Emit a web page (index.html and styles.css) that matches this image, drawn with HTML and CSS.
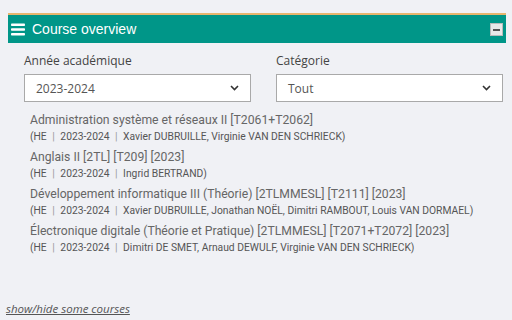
FILE: index.html
```html
<!DOCTYPE html>
<html>
	<head>
		<meta charset="UTF-8">
		<title>Course overview</title>
		<link rel="stylesheet" href="styles.css">
	</head>
	<body>
		<div class="panel">
			<div class="panel-head">
				<svg class="burger" width="14" height="13" viewBox="0 0 14 13">
					<rect x="0" y="0.5" width="14" height="2.6" rx="0.8" fill="#fff"/>
					<rect x="0" y="5.2" width="14" height="2.6" rx="0.8" fill="#fff"/>
					<rect x="0" y="9.9" width="14" height="2.6" rx="0.8" fill="#fff"/>
				</svg>
				<span class="panel-title">Course overview</span>
				<span class="collapse"><i></i></span>
			</div>
			<div class="filters">
				<div class="field">
					<label>Année académique</label>
					<div class="select">
						<span>2023-2024</span>
						<svg width="9" height="6" viewBox="0 0 9 6"><path d="M1 1l3.5 3.5L8 1" fill="none" stroke="#333" stroke-width="1.6"/></svg>
					</div>
				</div>
				<div class="field">
					<label>Catégorie</label>
					<div class="select">
						<span>Tout</span>
						<svg width="9" height="6" viewBox="0 0 9 6"><path d="M1 1l3.5 3.5L8 1" fill="none" stroke="#333" stroke-width="1.6"/></svg>
					</div>
				</div>
			</div>
			<ul class="courses">
				<li>
					<div class="c-title">Administration système et réseaux II [T2061+T2062]</div>
					<div class="c-meta">(HE <b>|</b> 2023-2024 <b>|</b> Xavier DUBRUILLE, Virginie VAN DEN SCHRIECK)</div>
				</li>
				<li>
					<div class="c-title">Anglais II [2TL] [T209] [2023]</div>
					<div class="c-meta">(HE <b>|</b> 2023-2024 <b>|</b> Ingrid BERTRAND)</div>
				</li>
				<li>
					<div class="c-title">Développement informatique III (Théorie) [2TLMMESL] [T2111] [2023]</div>
					<div class="c-meta">(HE <b>|</b> 2023-2024 <b>|</b> Xavier DUBRUILLE, Jonathan NOËL, Dimitri RAMBOUT, Louis VAN DORMAEL)</div>
				</li>
				<li>
					<div class="c-title">Électronique digitale (Théorie et Pratique) [2TLMMESL] [T2071+T2072] [2023]</div>
					<div class="c-meta">(HE <b>|</b> 2023-2024 <b>|</b> Dimitri DE SMET, Arnaud DEWULF, Virginie VAN DEN SCHRIECK)</div>
				</li>
			</ul>
		</div>
		<a class="toggle" href="#">show/hide some courses</a>
	</body>
</html>
```

FILE: styles.css
```css
body {
	margin: 0;
	padding: 13px 6px 0 8px;
	background-color: #f0f1f5;
	font-family: "Open Sans", "Liberation Sans", sans-serif;
	color: #444;
}

.panel {
	border-top: 2px solid #e6b56e;
}

.panel-head {
	display: flex;
	align-items: center;
	height: 28px;
	background-color: #009688;
	padding: 0 3px 0 3px;
}

.burger {
	margin-top: 1px;
}

.panel-title {
	flex: 1;
	margin-left: 7px;
	font-family: "Liberation Sans", Arial, sans-serif;
	font-size: 14px;
	color: #fff;
}

.collapse {
	display: flex;
	align-items: center;
	justify-content: center;
	width: 11px;
	height: 11px;
	background-color: #e9e9e9;
	border: 1px solid #bbb;
	margin-top: 1px;
}

.collapse i {
	display: block;
	width: 7px;
	height: 2px;
	background-color: #555;
}

.filters {
	display: flex;
	gap: 25px;
	padding: 10px 3px 0 16px;
}

.field {
	flex: 1;
}

.field label {
	display: block;
	font-size: 12px;
	line-height: 16px;
	color: #444;
	margin-bottom: 5px;
}

.select {
	display: flex;
	align-items: center;
	justify-content: space-between;
	height: 26px;
	background-color: #fff;
	border: 1px solid #a9a9a9;
	padding: 0 11px 0 11px;
	font-size: 12px;
	color: #555;
}

.courses {
	list-style: none;
	margin: 0;
	padding: 10px 0 0 22px;
	font-family: Roboto, "Liberation Sans", sans-serif;
}

.courses li {
	margin-bottom: 5px;
}

.c-title {
	font-size: 12.2px;
	line-height: 17px;
	color: #666;
}

.c-meta {
	font-size: 10.3px;
	line-height: 15px;
	color: #555;
}

.c-meta b {
	font-weight: normal;
	color: #999;
	margin: 0 3px;
}

.toggle {
	display: inline-block;
	margin: 41px 0 0 -2px;
	font-size: 11.5px;
	font-style: italic;
	color: #555;
}
```
